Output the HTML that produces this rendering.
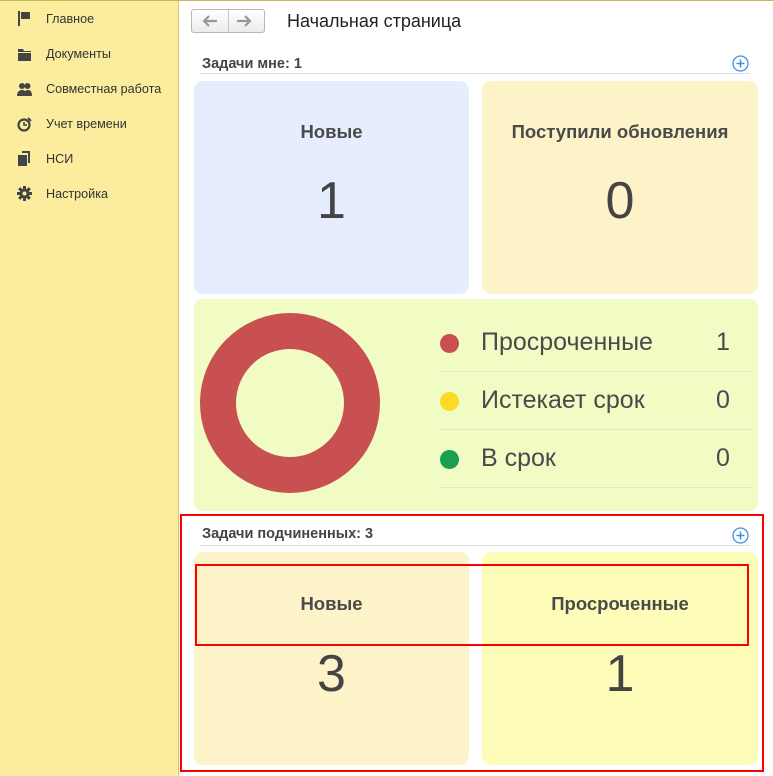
<!DOCTYPE html>
<html><head><meta charset="utf-8"><style>
*{margin:0;padding:0;box-sizing:border-box}
body{width:773px;height:776px;overflow:hidden;background:#fff;font-family:"Liberation Sans",Arial,sans-serif;position:relative;color:#4d4d4d}
.a{position:absolute}
#side{left:0;top:0;width:179px;height:776px;background:#fbec9e;border-right:1px solid #d8c476}
#top{left:0;top:0;width:773px;height:1px;background:#c9b45c}
.nav{position:absolute;left:46px;font-size:12.6px;color:#333}
.ic{position:absolute;left:17px;width:15px;height:15px}
.card{position:absolute;border-radius:9px}
.t{position:absolute;width:100%;text-align:center;font-weight:bold;font-size:18.5px;color:#4a4a4a}
.n{position:absolute;width:100%;text-align:center;font-size:52px;color:#444}
.hd{position:absolute;left:202px;font-weight:bold;font-size:14.5px;color:#444}
.ln{position:absolute;left:200px;width:550px;height:1px;background:#e0e0e0}
.plus{position:absolute;width:17px;height:17px}
.lg{position:absolute;left:481px;font-size:25px;color:#4a4a4a}
.lv{position:absolute;left:716px;font-size:25px;color:#4a4a4a}
.dot{position:absolute;left:440px;width:19px;height:19px;border-radius:50%}
.sep{position:absolute;left:440px;width:312px;height:1px;background:#dfe8c0}
</style></head><body>
<div id="side" class="a"></div><div id="top" class="a"></div>
<svg class="ic" style="top:11px" viewBox="0 0 15 15"><rect x="1" y="0" width="2" height="15" fill="#444"/><rect x="4" y="1" width="9" height="7" fill="#444"/></svg>
<div class="nav" style="top:12px">Главное</div>
<svg class="ic" style="top:47px" viewBox="0 0 15 15"><path d="M1 2h5l1 2h7v10H1z" fill="#444"/><rect x="1" y="5" width="13" height="1" fill="#fbec9e"/></svg>
<div class="nav" style="top:47px">Документы</div>
<svg class="ic" style="top:82px" viewBox="0 0 15 15"><circle cx="5" cy="4" r="3" fill="#444"/><circle cx="10.5" cy="4" r="3" fill="#444"/><path d="M0 14c0-5 3-6 5-6s5 1 5 6z M7 14c0-5 2-6 4-6s4 1 4 6z" fill="#444"/></svg>
<div class="nav" style="top:82px">Совместная работа</div>
<svg class="ic" style="top:117px" viewBox="0 0 15 15"><circle cx="7" cy="8" r="5.5" fill="none" stroke="#444" stroke-width="2.2"/><path d="M7 5v3h3" stroke="#444" stroke-width="1.6" fill="none"/><path d="M11 1l3 3" stroke="#444" stroke-width="2"/></svg>
<div class="nav" style="top:117px">Учет времени</div>
<svg class="ic" style="top:151px" viewBox="0 0 15 15"><rect x="1" y="4" width="9" height="11" fill="#444"/><path d="M5 0h8v12h-2V2H5z" fill="#444"/></svg>
<div class="nav" style="top:152px">НСИ</div>
<svg class="ic" style="top:186px" viewBox="0 0 15 15"><g fill="#444"><circle cx="7.5" cy="7.5" r="5"/><rect x="6" y="0" width="3" height="15"/><rect x="0" y="6" width="15" height="3"/><rect x="6" y="0" width="3" height="15" transform="rotate(45 7.5 7.5)"/><rect x="6" y="0" width="3" height="15" transform="rotate(-45 7.5 7.5)"/></g><circle cx="7.5" cy="7.5" r="2" fill="#fbec9e"/></svg>
<div class="nav" style="top:187px">Настройка</div>

<div class="a" style="left:191px;top:9px;width:74px;height:24px;border:1px solid #b8b8b8;border-radius:3px;background:linear-gradient(#fff,#ececec)"></div>
<div class="a" style="left:228px;top:10px;width:1px;height:22px;background:#c8c8c8"></div>
<svg class="a" style="left:202px;top:14px" width="16" height="14" viewBox="0 0 16 14"><path d="M2 7h13M7 2L2 7l5 5" stroke="#999" stroke-width="2.2" fill="none"/></svg>
<svg class="a" style="left:236px;top:14px" width="16" height="14" viewBox="0 0 16 14"><path d="M1 7h13M9 2l5 5-5 5" stroke="#999" stroke-width="2.2" fill="none"/></svg>
<div class="a" style="left:287px;top:11px;font-size:18px;color:#222">Начальная страница</div>

<div class="hd" style="top:56px">Задачи мне: 1</div>
<div class="ln" style="top:73px"></div>
<svg class="plus" style="left:732px;top:55px" viewBox="0 0 17 17"><circle cx="8.5" cy="8.5" r="7.5" fill="none" stroke="#3d8fe0" stroke-width="1.3"/><path d="M8.5 4.5v8M4.5 8.5h8" stroke="#3d8fe0" stroke-width="1.5"/></svg>

<div class="card" style="left:194px;top:81px;width:275px;height:213px;background:#e6eefd"><div class="t" style="top:40px">Новые</div><div class="n" style="top:90px">1</div></div>
<div class="card" style="left:482px;top:81px;width:276px;height:213px;background:#fdf3c8"><div class="t" style="top:40px">Поступили обновления</div><div class="n" style="top:90px">0</div></div>

<div class="card" style="left:194px;top:299px;width:564px;height:212px;background:#f1fcc4"></div>
<div class="a" style="left:200px;top:313px;width:180px;height:180px;border-radius:50%;border:36px solid #c85050"></div>
<div class="dot" style="top:334px;background:#c85050"></div><div class="lg" style="top:328px">Просроченные</div><div class="lv" style="top:328px">1</div>
<div class="sep" style="top:371px"></div>
<div class="dot" style="top:392px;background:#fdd92a"></div><div class="lg" style="top:386px">Истекает срок</div><div class="lv" style="top:386px">0</div>
<div class="sep" style="top:429px"></div>
<div class="dot" style="top:450px;background:#1a9e50"></div><div class="lg" style="top:444px">В срок</div><div class="lv" style="top:444px">0</div>
<div class="sep" style="top:487px"></div>

<div class="hd" style="top:526px">Задачи подчиненных: 3</div>
<div class="ln" style="top:545px"></div>
<svg class="plus" style="left:732px;top:527px" viewBox="0 0 17 17"><circle cx="8.5" cy="8.5" r="7.5" fill="none" stroke="#3d8fe0" stroke-width="1.3"/><path d="M8.5 4.5v8M4.5 8.5h8" stroke="#3d8fe0" stroke-width="1.5"/></svg>
<div class="card" style="left:194px;top:552px;width:275px;height:213px;background:#fdf3c9"><div class="t" style="top:41px">Новые</div><div class="n" style="top:92px">3</div></div>
<div class="card" style="left:482px;top:552px;width:276px;height:213px;background:#fdfdb9"><div class="t" style="top:41px">Просроченные</div><div class="n" style="top:92px">1</div></div>

<div class="a" style="left:180px;top:514px;width:584px;height:258px;border:2px solid #f00"></div>
<div class="a" style="left:195px;top:564px;width:554px;height:82px;border:2px solid #f00"></div>
</body></html>
